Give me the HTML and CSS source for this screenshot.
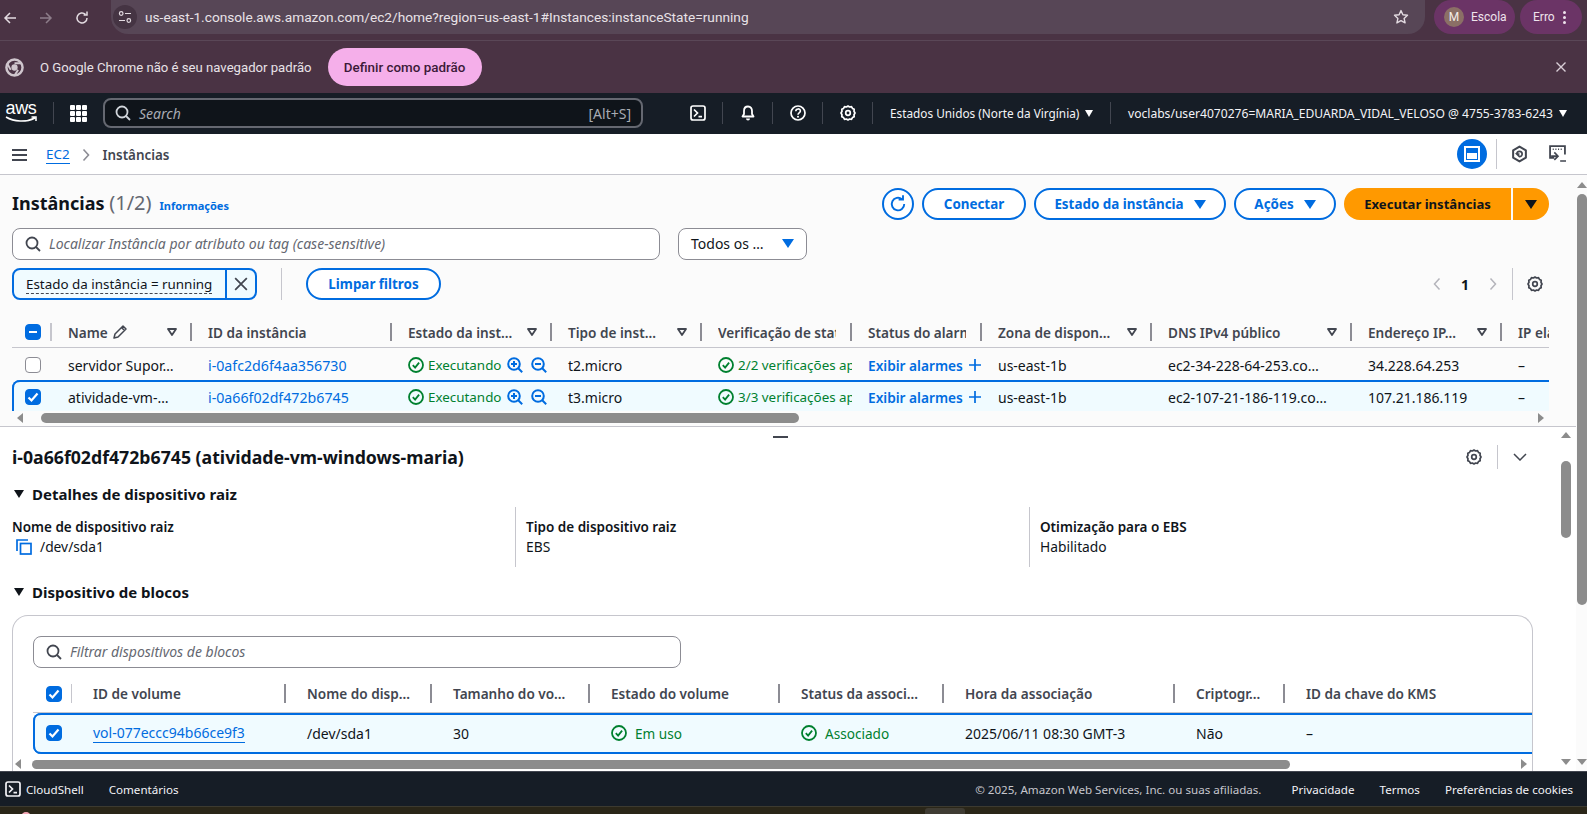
FILE: index.html
```html
<!DOCTYPE html>
<html lang="pt-BR">
<head>
<meta charset="utf-8">
<title>Instâncias | EC2</title>
<link rel="stylesheet" href="styles.css">
</head>
<body>
<svg class="defs" width="0" height="0" aria-hidden="true">
  <symbol id="gear" viewBox="0 0 16 16"><path d="M8 1l1.600 1 1.900-.3 1 1.700 1.700.9-.2 2L15 8l-1 1.700.2 2-1.700.9-1 1.700-1.900-.3L8 15l-1.600-1-1.900.3-1-1.700-1.700-.9.2-2L1 8l1-1.700-.2-2 1.700-.9 1-1.700 1.900.3z" fill="none" stroke="currentColor" stroke-width="1.700" stroke-linejoin="round"/><circle cx="8" cy="8" r="2.300" fill="none" stroke="currentColor" stroke-width="1.700"/></symbol>
  <symbol id="search" viewBox="0 0 16 16"><circle cx="7" cy="7" r="5.500" fill="none" stroke="currentColor" stroke-width="1.800"/><path d="M11 11l4 4" stroke="currentColor" stroke-width="1.800" fill="none"/></symbol>
  <symbol id="ok" viewBox="0 0 16 16"><circle cx="8" cy="8" r="7" fill="none" stroke="currentColor" stroke-width="1.800"/><path d="M4.800 8.200l2.300 2.400 4-5" fill="none" stroke="currentColor" stroke-width="1.800"/></symbol>
  <symbol id="zoomin" viewBox="0 0 16 16"><circle cx="7" cy="7" r="5.800" fill="none" stroke="currentColor" stroke-width="2"/><path d="M11 11l4.200 4.200M4 7h6M7 4v6" stroke="currentColor" stroke-width="2" fill="none"/></symbol>
  <symbol id="zoomout" viewBox="0 0 16 16"><circle cx="7" cy="7" r="5.800" fill="none" stroke="currentColor" stroke-width="2"/><path d="M11 11l4.200 4.200M4 7h6" stroke="currentColor" stroke-width="2" fill="none"/></symbol>
  <symbol id="term" viewBox="0 0 16 16"><rect x="1" y="1" width="14" height="14" rx="2" fill="none" stroke="currentColor" stroke-width="1.700"/><path d="M4 4.500L7.500 8 4 11.500M8.500 11.700H12" fill="none" stroke="currentColor" stroke-width="1.700"/></symbol>
  <symbol id="check" viewBox="0 0 16 16"><path d="M3.500 8.500l3 3 6-7" fill="none" stroke="#fff" stroke-width="2.200"/></symbol>
  <symbol id="sorter" viewBox="0 0 10 8"><path d="M1 1h8L5 7z" fill="none" stroke="currentColor" stroke-width="1.800" stroke-linejoin="round"/></symbol>
</svg>

<header class="toolbar">
  <svg class="tb-ico" viewBox="0 0 16 16"><path d="M14 8H3M8 3L3 8l5 5" fill="none" stroke="currentColor" stroke-width="1.500"/></svg>
  <svg class="tb-ico tb-dim" viewBox="0 0 16 16"><path d="M2 8h11M8 3l5 5-5 5" fill="none" stroke="currentColor" stroke-width="1.500"/></svg>
  <svg class="tb-ico" viewBox="0 0 16 16"><path d="M13 8a5 5 0 1 1-1.600-3.700M13 1.500v3.400H9.600" fill="none" stroke="currentColor" stroke-width="1.500"/></svg>
  <div class="omnibox">
    <span class="site-chip"><svg width="14" height="14" viewBox="0 0 14 14"><circle cx="3.200" cy="3.500" r="1.800" fill="none" stroke="currentColor" stroke-width="1.200"/><path d="M7 3.500h6M1 10.500h6" stroke="currentColor" stroke-width="1.200"/><circle cx="10.800" cy="10.500" r="1.800" fill="none" stroke="currentColor" stroke-width="1.200"/></svg></span>
    <span class="url">us-east-1.console.aws.amazon.com/ec2/home?region=us-east-1#Instances:instanceState=running</span>
    <svg class="star" viewBox="0 0 16 16"><path d="M8 1.600l1.900 4.200 4.600.5-3.400 3.100 1 4.500L8 11.600l-4.100 2.300 1-4.500-3.400-3.100 4.600-.5z" fill="none" stroke="currentColor" stroke-width="1.400" stroke-linejoin="round"/></svg>
  </div>
  <div class="pill pill-profile"><span class="avatar">M</span><span>Escola</span></div>
  <div class="pill pill-error"><span>Erro</span><span class="dots"><i></i><i></i><i></i></span></div>
</header>

<div class="infobar">
  <svg class="chrome-logo" viewBox="0 0 20 20"><circle cx="10" cy="10" r="8.500" fill="none" stroke="#cfc6cd" stroke-width="2.600"/><circle cx="10" cy="10" r="3.300" fill="#cfc6cd"/><path d="M10 5.500h8M6 12.500L2.500 6M13.800 12.500L10 18.500" stroke="#cfc6cd" stroke-width="2"/></svg>
  <span class="info-text">O Google Chrome não é seu navegador padrão</span>
  <button class="info-btn">Definir como padrão</button>
  <svg class="info-close" viewBox="0 0 12 12"><path d="M1.500 1.500l9 9M10.500 1.500l-9 9" stroke="currentColor" stroke-width="1.400"/></svg>
</div>

<nav class="awsnav">
  <div class="aws-logo"><span class="aws-word">aws</span><svg class="aws-smile" viewBox="0 0 32 7"><path d="M1 1c8 5 20 5.500 29 1M26.500 1H31v4" fill="none" stroke="#fff" stroke-width="1.500"/></svg></div>
  <span class="nav-sep sep-logo"></span>
  <span class="apps"><i></i><i></i><i></i><i></i><i></i><i></i><i></i><i></i><i></i></span>
  <div class="nav-search">
    <svg class="ico16" viewBox="0 0 16 16"><use href="#search"/></svg>
    <span class="nav-search-text">Search</span>
    <span class="nav-kbd">[Alt+S]</span>
  </div>
  <div class="nav-icon first"><svg class="ico16" viewBox="0 0 16 16"><use href="#term"/></svg></div>
  <span class="nav-sep"></span>
  <div class="nav-icon"><svg class="ico16" viewBox="0 0 16 16"><path d="M8 1.500c-2.800 0-4 2-4 4.500v3L2.500 11.500h11L12 9V6c0-2.500-1.200-4.500-4-4.500z" fill="none" stroke="currentColor" stroke-width="1.800" stroke-linejoin="round"/><path d="M6 13.500a2 2 0 0 0 4 0" fill="currentColor"/></svg></div>
  <span class="nav-sep"></span>
  <div class="nav-icon"><svg class="ico16" viewBox="0 0 16 16"><circle cx="8" cy="8" r="7" fill="none" stroke="currentColor" stroke-width="1.700"/><path d="M5.800 6.200c0-3 4.600-3 4.600-.2 0 1.900-2.400 1.900-2.400 3.700" fill="none" stroke="currentColor" stroke-width="1.600"/><circle cx="8" cy="11.800" r="1" fill="currentColor"/></svg></div>
  <span class="nav-sep"></span>
  <div class="nav-icon"><svg class="ico16" viewBox="0 0 16 16"><use href="#gear"/></svg></div>
  <span class="nav-sep"></span>
  <span class="nav-menu region">Estados Unidos (Norte da Virgínia)<i class="tri-w"></i></span>
  <span class="nav-sep"></span>
  <span class="nav-menu account">voclabs/user4070276=MARIA_EDUARDA_VIDAL_VELOSO @ 4755-3783-6243<i class="tri-w"></i></span>
</nav>

<div class="crumbbar">
  <span class="burger"><i></i><i></i><i></i></span>
  <a class="crumb-link">EC2</a>
  <svg class="crumb-chev" viewBox="0 0 8 14"><path d="M1.500 1.500L6.500 7l-5 5.500" fill="none" stroke="currentColor" stroke-width="1.600"/></svg>
  <span class="crumb-cur">Instâncias</span>
  <span class="crumb-tools">
    <span class="mode-btn"><svg width="16" height="16" viewBox="0 0 16 16"><rect x="1" y="1" width="14" height="14" fill="none" stroke="#fff" stroke-width="2"/><rect x="3" y="7" width="10" height="6" fill="#fff"/></svg></span>
    <span class="tool-sep"></span>
    <svg class="hex" viewBox="0 0 16 16"><path d="M8 1l6 3.500v7L8 15l-6-3.500v-7z" fill="none" stroke="currentColor" stroke-width="1.900" stroke-linejoin="round"/><path d="M5.500 8a2.500 2.500 0 1 1 2.500 2.500L5.500 8h2.500" fill="none" stroke="currentColor" stroke-width="1.600"/></svg>
    <svg class="shot" viewBox="0 0 16 16"><path d="M5 12H1V1h14v8" fill="none" stroke="currentColor" stroke-width="1.700"/><path d="M3.500 4h1M6 4h1M8.500 4h1M11 4h1" stroke="currentColor" stroke-width="1.500"/><path d="M5 7l3.500 3.500L5 14M2 10.500h6M10.500 15H16" fill="none" stroke="currentColor" stroke-width="1.500"/></svg>
  </span>
</div>

<div class="workspace">
  <div class="panes">
    <section class="upper">
      <div class="title-row">
        <h1 class="page-title">Instâncias <span class="count">(1/2)</span></h1>
        <a class="info-link">Informações</a>
        <div class="actions">
          <button class="btn-round"><svg width="20" height="20" viewBox="0 0 16 16"><path d="M13 8a5 5 0 1 1-1.800-3.800M12 1v3.500H8.500" fill="none" stroke="currentColor" stroke-width="1.500"/></svg></button>
          <button class="btn btn-conectar">Conectar</button>
          <button class="btn btn-estado">Estado da instância<i class="tri-b"></i></button>
          <button class="btn btn-acoes">Ações<i class="tri-b"></i></button>
          <div class="split"><button class="split-main">Executar instâncias</button><button class="split-drop"><i class="tri-k"></i></button></div>
        </div>
      </div>
      <div class="search-row">
        <div class="input input-main"><svg class="ico16 dim" viewBox="0 0 16 16"><use href="#search"/></svg><span class="ph">Localizar Instância por atributo ou tag (case-sensitive)</span></div>
        <div class="select"><span>Todos os …</span><i class="tri-b"></i></div>
      </div>
      <div class="filter-row">
        <div class="token"><span class="token-text"><span class="dashed">Estado da instância = running</span></span><span class="token-x"><svg width="14" height="14" viewBox="0 0 12 12"><path d="M1 1l10 10M11 1L1 11" stroke="#424650" stroke-width="1.500"/></svg></span></div>
        <span class="filter-sep"></span>
        <button class="btn btn-limpar">Limpar filtros</button>
        <div class="pager">
          <svg class="pg-chev" viewBox="0 0 8 14"><path d="M6.500 1.500L1.500 7l5 5.500" fill="none" stroke="currentColor" stroke-width="1.500"/></svg>
          <span class="pg-num">1</span>
          <svg class="pg-chev" viewBox="0 0 8 14"><path d="M1.500 1.500L6.500 7l-5 5.500" fill="none" stroke="currentColor" stroke-width="1.500"/></svg>
          <span class="pg-sep"></span>
          <svg class="ico16 pg-gear" viewBox="0 0 16 16"><use href="#gear"/></svg>
        </div>
      </div>

      <div class="inst-table">
        <div class="inst-grid thead">
          <div class="th th-cb"><span class="cb cb-on cb-mixed"><i></i></span></div>
          <div class="th">Name <svg class="pencil" viewBox="0 0 16 16"><path d="M2 14l1-4 8-8 3 3-8 8zM9.500 3.500l3 3" fill="none" stroke="currentColor" stroke-width="1.500" stroke-linejoin="round"/></svg><svg class="sort" viewBox="0 0 10 8"><use href="#sorter"/></svg></div>
          <div class="th">ID da instância</div>
          <div class="th">Estado da inst…<svg class="sort" viewBox="0 0 10 8"><use href="#sorter"/></svg></div>
          <div class="th">Tipo de inst…<svg class="sort" viewBox="0 0 10 8"><use href="#sorter"/></svg></div>
          <div class="th"><span class="clip c118">Verificação de stat</span></div>
          <div class="th"><span class="clip c98">Status do alarm</span></div>
          <div class="th">Zona de dispon…<svg class="sort" viewBox="0 0 10 8"><use href="#sorter"/></svg></div>
          <div class="th">DNS IPv4 público<svg class="sort" viewBox="0 0 10 8"><use href="#sorter"/></svg></div>
          <div class="th">Endereço IP…<svg class="sort" viewBox="0 0 10 8"><use href="#sorter"/></svg></div>
          <div class="th th-last"><span class="clip">IP elá</span></div>
        </div>
        <div class="rows">
          <div class="inst-grid row">
            <div class="td td-cb"><span class="cb"></span></div>
            <div class="td">servidor Supor…</div>
            <div class="td"><a class="link">i-0afc2d6f4aa356730</a></div>
            <div class="td ok"><svg class="ico16" viewBox="0 0 16 16"><use href="#ok"/></svg><span class="ok-text">Executando</span><svg class="zi zi1" viewBox="0 0 16 16"><use href="#zoomin"/></svg><svg class="zi zi2" viewBox="0 0 16 16"><use href="#zoomout"/></svg></div>
            <div class="td">t2.micro</div>
            <div class="td ok"><svg class="ico16" viewBox="0 0 16 16"><use href="#ok"/></svg><span class="ok-text clip">2/2 verificações ap</span></div>
            <div class="td"><a class="link strong">Exibir alarmes</a><svg class="plus" viewBox="0 0 14 14"><path d="M7 0v14M0 7h14" stroke="currentColor" stroke-width="2"/></svg></div>
            <div class="td">us-east-1b</div>
            <div class="td">ec2-34-228-64-253.co…</div>
            <div class="td">34.228.64.253</div>
            <div class="td">–</div>
          </div>
          <div class="inst-grid row row-sel">
            <div class="td td-cb"><span class="cb cb-on"><svg viewBox="0 0 16 16"><use href="#check"/></svg></span></div>
            <div class="td">atividade-vm-…</div>
            <div class="td"><a class="link">i-0a66f02df472b6745</a></div>
            <div class="td ok"><svg class="ico16" viewBox="0 0 16 16"><use href="#ok"/></svg><span class="ok-text">Executando</span><svg class="zi zi1" viewBox="0 0 16 16"><use href="#zoomin"/></svg><svg class="zi zi2" viewBox="0 0 16 16"><use href="#zoomout"/></svg></div>
            <div class="td">t3.micro</div>
            <div class="td ok"><svg class="ico16" viewBox="0 0 16 16"><use href="#ok"/></svg><span class="ok-text clip">3/3 verificações ap</span></div>
            <div class="td"><a class="link strong">Exibir alarmes</a><svg class="plus" viewBox="0 0 14 14"><path d="M7 0v14M0 7h14" stroke="currentColor" stroke-width="2"/></svg></div>
            <div class="td">us-east-1b</div>
            <div class="td">ec2-107-21-186-119.co…</div>
            <div class="td">107.21.186.119</div>
            <div class="td">–</div>
          </div>
        </div>
        <div class="hscroll hs-upper"><i class="arr-l"></i><span class="thumb"></span><i class="arr-r"></i></div>
      </div>
    </section>

    <section class="lower">
      <span class="drag-handle"></span>
      <div class="lower-body">
        <div class="detail-head">
          <h2 class="detail-title">i-0a66f02df472b6745 (atividade-vm-windows-maria)</h2>
          <div class="detail-tools">
            <svg class="ico16 pg-gear" viewBox="0 0 16 16"><use href="#gear"/></svg>
            <span class="detail-sep"></span>
            <svg class="detail-chev" viewBox="0 0 14 8"><path d="M1 1l6 6 6-6" fill="none" stroke="currentColor" stroke-width="1.500"/></svg>
          </div>
        </div>
        <h3 class="section-head"><i class="tri-d"></i>Detalhes de dispositivo raiz</h3>
        <div class="kv-grid">
          <div class="kv"><div class="kv-k">Nome de dispositivo raiz</div><div class="kv-v"><svg class="copy" viewBox="0 0 16 16"><path d="M1 12V1h11" fill="none" stroke="currentColor" stroke-width="1.700"/><rect x="4.500" y="4.500" width="10.500" height="10.500" fill="none" stroke="currentColor" stroke-width="1.700"/></svg>/dev/sda1</div></div>
          <div class="kv kv-b"><div class="kv-k">Tipo de dispositivo raiz</div><div class="kv-v">EBS</div></div>
          <div class="kv kv-b"><div class="kv-k">Otimização para o EBS</div><div class="kv-v">Habilitado</div></div>
        </div>
        <h3 class="section-head head2"><i class="tri-d"></i>Dispositivo de blocos</h3>
        <div class="vol-card">
          <div class="input input-vol"><svg class="ico16 dim" viewBox="0 0 16 16"><use href="#search"/></svg><span class="ph">Filtrar dispositivos de blocos</span></div>
          <div class="vol-grid vol-head">
            <div class="vh vh-cb"><span class="cb cb-on"><svg viewBox="0 0 16 16"><use href="#check"/></svg></span></div>
            <div class="vh">ID de volume</div>
            <div class="vh">Nome do disp…</div>
            <div class="vh">Tamanho do vo…</div>
            <div class="vh">Estado do volume</div>
            <div class="vh">Status da associ…</div>
            <div class="vh">Hora da associação</div>
            <div class="vh">Criptogr…</div>
            <div class="vh vh-last">ID da chave do KMS</div>
          </div>
          <div class="vol-grid vol-row">
            <div class="vd vd-cb"><span class="cb cb-on"><svg viewBox="0 0 16 16"><use href="#check"/></svg></span></div>
            <div class="vd"><a class="link underlined">vol-077eccc94b66ce9f3</a></div>
            <div class="vd">/dev/sda1</div>
            <div class="vd">30</div>
            <div class="vd ok"><svg class="ico16" viewBox="0 0 16 16"><use href="#ok"/></svg><span class="ok-text wide">Em uso</span></div>
            <div class="vd ok"><svg class="ico16" viewBox="0 0 16 16"><use href="#ok"/></svg><span class="ok-text wide">Associado</span></div>
            <div class="vd">2025/06/11 08:30 GMT-3</div>
            <div class="vd">Não</div>
            <div class="vd">–</div>
          </div>
          <div class="hscroll hs-lower"><i class="arr-l"></i><span class="thumb"></span><i class="arr-r"></i></div>
        </div>
      </div>
      <div class="vscroll vs-inner"><i class="arr-u"></i><span class="vthumb"></span><i class="arr-d"></i></div>
    </section>
  </div>
  <div class="vscroll vs-outer"><i class="arr-u"></i><span class="vthumb"></span><i class="arr-d"></i></div>
</div>

<footer class="footer">
  <svg class="ico16" viewBox="0 0 16 16"><use href="#term"/></svg>
  <span class="f-cloud">CloudShell</span>
  <span class="f-comment">Comentários</span>
  <span class="f-copy">© 2025, Amazon Web Services, Inc. ou suas afiliadas.</span>
  <span class="f-link">Privacidade</span>
  <span class="f-link">Termos</span>
  <span class="f-link">Preferências de cookies</span>
</footer>
<div class="taskstrip"><i class="task-dot"></i><i class="task-tab"></i></div>
</body>
</html>
```

FILE: styles.css
```css
* { box-sizing: border-box; }
html, body { margin: 0; padding: 0; }
body {
  width: 1587px; height: 814px; overflow: hidden;
  display: flex; flex-direction: column;
  font-family: "Noto Sans", "Open Sans", sans-serif;
  font-size: 14px; color: #0f141a; background: #fff;
}
.defs { position: absolute; }
i { font-style: normal; display: block; }
button { font-family: inherit; cursor: pointer; }
h1, h2, h3 { margin: 0; }
.ico16 { width: 16px; height: 16px; flex: none; }
.dim { color: #424650; }

/* browser chrome */
.toolbar {
  height: 41px; flex: none; display: flex; align-items: flex-start;
  background: #4a3344; border-bottom: 1px solid #5a4757; color: #e3dbe1;
  padding-left: 2px; font-family: Roboto, sans-serif;
}
.tb-ico { width: 16px; height: 16px; margin: 10px 20px 0 0; flex: none; }
.tb-dim { color: #8d7d8a; }
.omnibox {
  width: 1314px; height: 34px; margin-left: 1px; flex: none;
  display: flex; align-items: center; background: #574656;
  border-radius: 0 0 17px 17px; padding-left: 2px;
}
.site-chip {
  width: 24px; height: 24px; border-radius: 50%; background: #453443;
  display: flex; align-items: center; justify-content: center; flex: none;
}
.url { margin-left: 8px; font-size: 13.700px; color: #e8e2e7; white-space: nowrap; flex: 1; }
.star { width: 16px; height: 16px; margin-right: 16px; color: #e3dbe1; flex: none; }
.pill {
  height: 34px; background: #6b3466; flex: none;
  display: flex; align-items: center; font-size: 12px; color: #eee3ec;
}
.pill-profile { width: 81px; margin-left: 9px; padding-left: 10px; gap: 7px; border-radius: 17px; }
.pill-error { width: 62px; margin-left: 5px; padding-left: 13px; gap: 8px; border-radius: 17px; }
.avatar {
  width: 20px; height: 20px; border-radius: 50%; background: #8b6f66; color: #f3ece8;
  display: flex; align-items: center; justify-content: center; font-size: 12px;
}
.dots { display: flex; flex-direction: column; gap: 2px; }
.dots i { width: 3px; height: 3px; border-radius: 50%; background: #eee3ec; }

.infobar {
  height: 52px; flex: none; display: flex; align-items: center;
  background: #4a3344; color: #e8e2e7; font-family: Roboto, sans-serif; font-size: 13.150px;
  padding-left: 5px; padding-right: 20px;
}
.chrome-logo { width: 19px; height: 19px; flex: none; }
.info-text { margin-left: 16px; }
.info-btn {
  margin-left: 16px; width: 154px; height: 38px; border: 0; border-radius: 19px;
  background: #f5afea; color: #3c1a38; font: 500 13.400px Roboto, sans-serif;
}
.info-close { width: 12px; height: 12px; margin-left: auto; color: #d9cfd7; }

/* aws navigation */
.awsnav {
  height: 41px; flex: none; display: flex; align-items: center;
  background: #161d26; color: #fff; font-size: 12px; padding-bottom: 1px;
}
.aws-logo { width: 32px; margin-left: 5px; display: flex; flex-direction: column; align-items: center; flex: none; }
.aws-word { font: 18px/15px "Liberation Sans", sans-serif; letter-spacing: -.3px; margin-top: -2px; }
.aws-smile { width: 32px; height: 7px; display: block; }
.nav-sep { width: 1px; height: 22px; background: #424650; flex: none; }
.sep-logo { margin-left: 16px; }
.apps { display: grid; grid-template-columns: repeat(3, 5px); gap: 1px; margin-left: 16px; flex: none; }
.apps i { width: 5px; height: 5px; background: #fff; border-radius: 1px; }
.nav-search {
  width: 540px; height: 30px; margin-left: 16px; flex: none;
  display: flex; align-items: center; padding: 0 10px;
  background: #0f141a; border: 2px solid #656871; border-radius: 8px; color: #d1d5db;
}
.nav-search-text { margin-left: 8px; font-style: italic; color: #a8abb3; font-size: 14px; }
.nav-kbd { margin-left: auto; color: #a8abb3; font-size: 14px; }
.nav-icon { width: 49px; flex: none; display: flex; justify-content: center; color: #fff; }
.nav-icon.first { margin-left: 31px; width: 48px; }
.nav-menu { display: flex; align-items: center; white-space: nowrap; flex: none; color: #f3f3f7; }
.region { margin-left: 17px; width: 220px; font-size: 11.800px; }
.account { margin-left: 17px; font-size: 12.100px; }
.tri-w { width: 0; height: 0; margin-left: 6px; border: 4.500px solid transparent; border-top: 7px solid #fff; border-bottom: 0; }

/* breadcrumb bar */
.crumbbar {
  height: 41px; flex: none; display: flex; align-items: center;
  background: #fff; border-bottom: 1px solid #c6c6cd; padding: 2px 0 0 12px; font-size: 13.400px;
}
.burger { width: 15px; display: flex; flex-direction: column; gap: 3px; flex: none; }
.burger i { height: 2px; background: #424650; }
.crumb-link { margin-left: 19px; color: #006ce0; border-bottom: 1px solid #006ce0; line-height: 17px; }
.crumb-chev { width: 8px; height: 14px; margin-left: 12px; color: #8c8c94; }
.crumb-cur { margin-left: 13px; font-weight: 600; color: #424650; }
.crumb-tools { margin-left: auto; display: flex; align-items: center; width: 130px; height: 30px; flex: none; margin-top: -3px; }
.mode-btn {
  width: 30px; height: 30px; border-radius: 50%; background: #006ce0; flex: none;
  display: flex; align-items: center; justify-content: center;
}
.tool-sep { width: 1px; height: 30px; background: #c6c6cd; margin-left: 9px; }
.hex { width: 17px; height: 18px; margin-left: 14px; color: #424650; flex: none; }
.shot { width: 17px; height: 17px; margin-left: 21px; color: #424650; flex: none; }

/* workspace */
.workspace { height: 596px; flex: none; display: flex; background: #fbfbfb; }
.panes { width: 1576px; flex: none; display: flex; flex-direction: column; }
.upper {
  height: 252px; flex: none; padding: 13px 0 0 12px; width: 1576px;
  background: #fbfbfb; border-bottom: 1px solid #c6c6cd;
}
.title-row { height: 32px; width: 1537px; display: flex; align-items: center; }
.page-title { font-size: 18px; font-weight: 700; white-space: nowrap; color: #0f141a; line-height: 26px; margin-top: -2px; }
.count { font-weight: 400; color: #656871; font-size: 20px; }
.info-link { margin-left: 8px; font-size: 11px; font-weight: 700; color: #006ce0; padding-top: 3px; }
.actions { margin-left: auto; display: flex; align-items: center; gap: 8px; }
.btn-round {
  width: 32px; height: 32px; border-radius: 50%; padding: 0;
  border: 2px solid #006ce0; background: #fff; color: #006ce0;
  display: flex; align-items: center; justify-content: center;
}
.btn {
  height: 32px; border: 2px solid #006ce0; border-radius: 16px; background: #fff;
  color: #006ce0; font-size: 13.400px; font-weight: 700; padding: 0;
  display: flex; align-items: center; justify-content: center; gap: 10px; white-space: nowrap;
}
.btn-conectar { width: 104px; }
.btn-estado { width: 192px; }
.btn-acoes { width: 102px; }
.btn-limpar { width: 135px; }
.tri-b { width: 0; height: 0; border: 6px solid transparent; border-top: 9px solid #006ce0; border-bottom: 0; }
.tri-k { width: 0; height: 0; border: 6px solid transparent; border-top: 9px solid #0f141a; border-bottom: 0; }
.split { display: flex; gap: 2px; }
.split-main {
  width: 167px; height: 32px; border: 0; background: #ff9900; color: #0f141a;
  border-radius: 16px 0 0 16px; font-size: 13.100px; font-weight: 700; padding: 0;
}
.split-drop {
  width: 36px; height: 32px; border: 0; background: #ff9900; border-radius: 0 16px 16px 0;
  display: flex; align-items: center; justify-content: center; padding: 0;
}
.search-row { display: flex; margin-top: 8px; gap: 18px; }
.input {
  height: 32px; border: 1px solid #8c8c94; border-radius: 8px; background: #fff;
  display: flex; align-items: center; padding-left: 12px;
}
.input-main { width: 648px; }
.ph { margin-left: 8px; font-style: italic; color: #656871; font-size: 14px; white-space: nowrap; padding-bottom: 2px; }
.select {
  width: 129px; height: 32px; border: 1px solid #8c8c94; border-radius: 8px; background: #fff;
  display: flex; align-items: center; justify-content: space-between; padding: 0 12px 1px; font-size: 14px;
}
.filter-row { display: flex; align-items: center; height: 32px; margin-top: 8px; width: 1537px; }
.token {
  width: 245px; height: 32px; border: 2px solid #006ce0; border-radius: 8px;
  background: #f0fbff; display: flex; flex: none; overflow: hidden;
}
.token-text { flex: 1; padding-left: 12px; display: flex; align-items: center; font-size: 13.400px; white-space: nowrap; }
.dashed { border-bottom: 1px dashed #424650; line-height: 18px; }
.token-x { width: 30px; border-left: 2px solid #006ce0; display: flex; align-items: center; justify-content: center; flex: none; }
.filter-sep { width: 1px; height: 32px; background: #c6c6cd; margin: 0 24px; flex: none; }
.pager { margin-left: auto; display: flex; align-items: center; padding-right: 6px; }
.pg-chev { width: 8px; height: 14px; color: #b4b4bb; flex: none; }
.pg-num { width: 48px; text-align: center; font-weight: 700; font-size: 14px; }
.pg-sep { width: 1px; height: 32px; background: #c6c6cd; margin: 0 14px 0 15px; }
.pg-gear { color: #424650; }

/* instances table */
.inst-table { width: 1537px; margin-top: 23px; }
.inst-grid {
  display: grid;
  grid-template-columns: 40px 140px 200px 160px 150px 150px 130px 170px 200px 150px 47px;
}
.thead { height: 25px; border-bottom: 1px solid #c6c6cd; }
.th {
  height: 18px; position: relative; display: flex; align-items: center;
  padding-left: 16px; font-weight: 600; font-size: 13.600px; color: #424650; white-space: nowrap;
  border-right: 2px solid #8c8c94;
}
.th-cb { padding-left: 13px; border-right: 2px solid #c6c6cd; }
.th-last { border-right: 0; overflow: hidden; }
.pencil { width: 16px; height: 16px; margin-left: 4px; }
.sort { position: absolute; right: 13px; top: 5px; width: 10px; height: 8px; color: #424650; }
.clip { overflow: hidden; white-space: nowrap; display: block; }
.c118 { width: 118px; }
.c98 { width: 98px; }
.cb {
  width: 16px; height: 16px; border-radius: 4px; border: 1px solid #8c8c94; background: #fff;
  display: flex; align-items: center; justify-content: center; flex: none;
}
.cb svg { width: 16px; height: 16px; flex: none; }
.cb-on { background: #006ce0; border-color: #006ce0; }
.cb-mixed i { width: 8px; height: 2px; background: #fff; }
.rows { height: 63px; overflow: hidden; }
.row { height: 32px; }
.td {
  display: flex; align-items: center; padding: 2px 0 0 16px; font-size: 14px;
  white-space: nowrap; overflow: hidden; height: 32px; position: relative;
}
.td-cb { padding-left: 13px; }
.row-sel {
  background: #f0fbff; border-radius: 8px 0 0 0; height: 32px;
  box-shadow: inset 0 2px 0 #006ce0, inset 2px 0 0 #006ce0;
}
.link { color: #006ce0; white-space: nowrap; font-size: 14.200px; }
.link.strong { font-weight: 600; font-size: 13.700px; }
.ok { color: #00802f; }
.ok-text { margin-left: 4px; font-size: 13.400px; }
.zi { width: 16px; height: 16px; position: absolute; top: 9px; color: #006ce0; }
.zi1 { left: 115px; }
.zi2 { left: 139px; }
.plus { width: 12px; height: 12px; margin-left: 6px; color: #006ce0; flex: none; }

.hscroll { display: flex; align-items: center; position: relative; }
.hs-upper { height: 12px; margin-top: 1px; }
.thumb { height: 10px; border-radius: 5px; background: #8c8c8c; display: block; }
.hs-upper .thumb { width: 758px; margin-left: 18px; }
.arr-l { width: 0; height: 0; margin-left: 5px; border: 5px solid transparent; border-right: 6px solid #8c8c8c; border-left: 0; }
.arr-r { width: 0; height: 0; border: 5px solid transparent; border-left: 6px solid #8c8c8c; border-right: 0; margin-left: auto; }
.hs-upper .arr-r { margin-right: 5px; }

/* lower pane */
.lower { height: 344px; flex: none; display: flex; position: relative; background: #fff; }
.drag-handle { position: absolute; left: 773px; top: 9px; width: 15px; height: 2px; background: #424650; }
.lower-body { width: 1561px; flex: none; padding-left: 12px; overflow: hidden; }
.detail-head { height: 30px; margin-top: 15px; display: flex; align-items: center; width: 1521px; }
.detail-title { font-size: 17.700px; font-weight: 700; color: #0f141a; white-space: nowrap; }
.detail-tools { margin-left: auto; display: flex; align-items: center; padding-right: 6px; }
.detail-sep { width: 1px; height: 24px; background: #c6c6cd; margin: 0 15px; }
.detail-chev { width: 14px; height: 8px; color: #424650; }
.section-head {
  font-size: 15px; font-weight: 700; display: flex; align-items: center; height: 24px; margin-top: 10px;
}
.tri-d { width: 0; height: 0; margin: 0 8px 0 2px; border: 5.500px solid transparent; border-top: 8px solid #0f141a; border-bottom: 0; }
.kv-grid { display: grid; grid-template-columns: 503px 514px 504px; height: 60px; margin-top: 1px; }
.kv { padding-top: 10px; }
.kv-b { border-left: 1px solid #c6c6cd; padding-left: 10px; }
.kv-k { font-weight: 600; font-size: 13.500px; line-height: 20px; }
.kv-v { font-size: 13.800px; line-height: 20px; display: flex; align-items: center; color: #0f141a; }
.copy { width: 16px; height: 16px; color: #006ce0; margin: 0 8px 0 4px; }
.head2 { margin-top: 13px; }
.vol-card {
  width: 1521px; height: 156px; margin-top: 11px; border: 1px solid #c6c6cd; border-bottom: 0;
  border-radius: 16px 16px 0 0; padding-top: 20px; background: #fff; overflow: hidden;
}
.input-vol { width: 648px; margin-left: 20px; }
.vol-grid {
  display: grid; margin-left: 20px;
  grid-template-columns: 39px 214px 146px 158px 190px 164px 231px 110px 247px;
}
.vol-head { height: 29px; margin-top: 16px; align-items: start; border-bottom: 1px solid #c6c6cd; }
.vh {
  height: 19px; padding-left: 21px; font-weight: 600; font-size: 13.600px; color: #424650;
  white-space: nowrap; border-right: 2px solid #8c8c94; display: flex; align-items: center;
}
.vh-cb { padding-left: 13px; border-right: 1px solid #c6c6cd; }
.vh-last { border-right: 0; }
.vol-row {
  height: 41px; background: #f0fbff; border-radius: 8px 0 0 8px;
  box-shadow: inset 0 2px 0 #006ce0, inset 0 -2px 0 #006ce0, inset 2px 0 0 #006ce0;
}
.vd { display: flex; align-items: center; padding: 0 0 1px 21px; font-size: 14px; white-space: nowrap; }
.vd-cb { padding-left: 13px; }
.ok-text.wide { margin-left: 8px; font-size: 13.600px; }
.underlined { border-bottom: 1px solid #006ce0; line-height: 18px; font-size: 14px; }
.hs-lower { height: 10px; margin-top: 5px; }
.hs-lower .arr-l { margin-left: 2px; }
.hs-lower .thumb { width: 1258px; margin-left: 11px; height: 9px; }
.hs-lower .arr-r { margin-right: 5px; }

/* scrollbars */
.vscroll { display: flex; flex-direction: column; align-items: center; position: relative; }
.vs-inner { width: 10px; flex: none; height: 344px; }
.vs-outer { width: 11px; flex: none; height: 596px; background: #fbfbfb; }
.arr-u { width: 0; height: 0; border: 5px solid transparent; border-bottom: 6px solid #8c8c8c; border-top: 0; }
.arr-d { width: 0; height: 0; border: 5px solid transparent; border-top: 6px solid #8c8c8c; border-bottom: 0; position: absolute; bottom: 6px; }
.vthumb { display: block; border-radius: 5px; background: #8c8c8c; width: 10px; }
.vs-inner .arr-u { margin-top: 5px; }
.vs-inner .vthumb { height: 77px; margin-top: 23px; }
.vs-outer .arr-u { margin-top: 7px; }
.vs-outer .vthumb { height: 411px; margin-top: 6px; }

/* footer */
.footer {
  height: 35px; flex: none; display: flex; align-items: center; background: #161d26;
  color: #f3f3f7; font-size: 11.600px; padding-left: 5px; white-space: nowrap;
  border-top: 1px solid #424650;
}
.f-cloud { margin-left: 5px; }
.f-comment { margin-left: 25px; }
.f-copy { margin-left: auto; color: #c6c6cd; margin-right: 30px; }
.f-link { margin-right: 25px; }
.f-link:last-child { margin-right: 14px; }
.taskstrip { height: 8px; flex: none; background: #2a2618; border-top: 1px solid #3c3a30; position: relative; overflow: hidden; }
.task-dot { position: absolute; left: 21px; top: 5px; width: 10px; height: 10px; border-radius: 50%; background: #f4a6b5; }
.task-tab { position: absolute; left: 925px; top: 1px; width: 40px; height: 10px; border-radius: 3px 3px 0 0; background: #3f3c33; }
```
